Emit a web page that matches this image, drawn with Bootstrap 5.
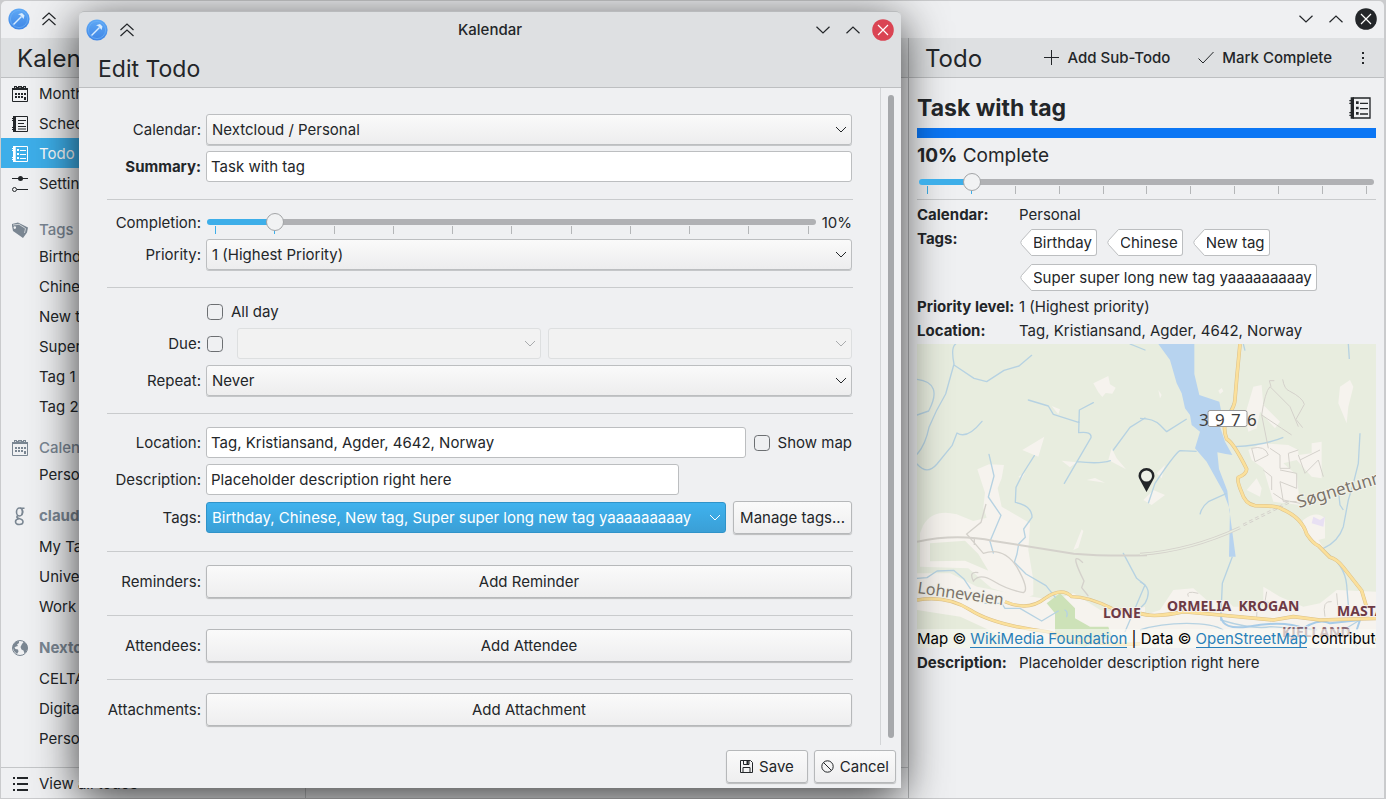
<!DOCTYPE html>
<html lang="en">
<head>
<meta charset="utf-8">
<meta name="viewport" content="width=device-width, initial-scale=1">
<title>Kalendar</title>
<link href="https://cdn.jsdelivr.net/npm/bootstrap@5.3.0/dist/css/bootstrap.min.css" rel="stylesheet">
<style>
:root{--ink:#232629;--win:#eff0f2;--head:#dee0e2;--line:#c4c6c8;--accent:#3daee9;--muted:#7a8692}
body{font:15px/24px Inter,"Noto Sans",sans-serif;color:var(--ink);background:#cacbcd;height:100vh;overflow:hidden;padding:1px 2px 1px 1px}
svg{display:block;flex:none}
.ic{fill:none;stroke:currentColor}
a{color:#2980b9}
.defs{position:absolute}
.main-win{background:var(--win);height:100%;border-radius:5px 5px 0 0}
.title-strip{height:37px;padding:0 7px 2px}
.icon-btn{border:0;background:none;padding:0;color:inherit;display:block}
.win-btns{gap:16px}
.close-btn{margin-left:-4px}
.keep-btn{margin-left:11px}
.pane-head{background:var(--head);height:40px;border-bottom:1px solid #bdbfc1}
.pane-title{font-size:24px;line-height:42px;font-weight:400;margin:0}
.detail-head{padding:0 18px 0 16px}
.detail-head .pane-title{padding-top:2px;line-height:38px}
.side{width:305px;border-right:1px solid var(--line)}
.detail{width:476px;border-left:1px solid #b4b6b8}
.side-item{height:30px;padding:2px 0 0 10px;gap:10px;color:inherit;text-decoration:none;display:flex;align-items:center;white-space:nowrap}
.side-item.sub-item{padding:0 0 0 38px}
.side-item.on{background:var(--accent);color:#fff}
.side-head{color:var(--muted);padding-left:10px;gap:10px;margin:13px 0 0;height:25px;font-size:15px;font-weight:500;display:flex;align-items:center}
.side-head.first{margin-top:20px;height:24px}
.side-head.acct{font-weight:700;height:32px;margin-top:10px}
.foot-bar{height:31px;border-top:1px solid var(--line)}
.tool-btn{border:0;background:none;padding:0;color:inherit;font-weight:500;display:flex;align-items:center;gap:8px}

.dialog-win{position:absolute;left:79px;top:11px;right:485px;bottom:11px;background:var(--win);border-radius:5px 5px 0 0;box-shadow:0 10px 46px rgba(0,0,0,.76)}
.dialog-top{background:var(--head);border-bottom:1px solid #bdbfc1;border-radius:5px 5px 0 0;height:77px;border-top:1px solid #b9bbbd}
.dialog-bar{height:35px;padding:0 7px}
.dialog-title{font-size:23px;line-height:44px;padding:0 19px}
.form-area{padding:26px 28px 0 28px;border-right:1px solid #d3d5d7}
.scroll-lane{width:20px;padding:7px}
.scroll-thumb{background:#a6a8ab;border-radius:3px;height:100%}
.f-row{display:grid;grid-template-columns:94px minmax(0,1fr);column-gap:5px;align-items:center;margin-bottom:6px}
.f-row>label,.f-row>.lab{text-align:right;white-space:nowrap;line-height:20px}
.f-rule{height:1px;border:0;opacity:1;background:#c9cbcd;margin:17px -1px 13px 0}
.f-row:has(+ .f-rule){margin-bottom:0}
.form-select,.form-control{height:31px;font-size:15px;line-height:20px;padding:0 5px;border:1px solid #bcbec0;border-radius:3px;color:var(--ink)}
.form-control{background:#fff;padding:0 4px}
.form-select{background:url("data:image/svg+xml,%3Csvg xmlns='http://www.w3.org/2000/svg' width='12' height='7'%3E%3Cpath d='M1 1l5 5 5-5' fill='none' stroke='%23232629'/%3E%3C/svg%3E") no-repeat right 4px center/12px 7px,linear-gradient(#fafafa,#ededee);box-shadow:0 1px 0 #c4c6c8}
.form-select:disabled{background:url("data:image/svg+xml,%3Csvg xmlns='http://www.w3.org/2000/svg' width='12' height='7'%3E%3Cpath d='M1 1l5 5 5-5' fill='none' stroke='%23a9abad'/%3E%3C/svg%3E") no-repeat right 4px center/12px 7px,#f2f2f2;border-color:#dddfe0;box-shadow:none}
.form-select.tags-sel{color:#fff;border-color:#2f93c9;background:url("data:image/svg+xml,%3Csvg xmlns='http://www.w3.org/2000/svg' width='12' height='7'%3E%3Cpath d='M1 1l5 5 5-5' fill='none' stroke='%23fff'/%3E%3C/svg%3E") no-repeat right 4px center/12px 7px,linear-gradient(#3fb2ee,#3a9fd6);box-shadow:none}
.k-btn{height:33px;font-size:15px;line-height:20px;padding:0 6px;border:1px solid #b6b8ba;border-radius:3px;background:linear-gradient(#fafafa,#eeeeef);color:var(--ink);box-shadow:0 1px 1px rgba(0,0,0,.22);white-space:nowrap}
.gap-tag{margin-left:7px}
.dialog-foot{padding:5px 5px 5px 0;gap:6px}
.dialog-foot .k-btn{display:flex;align-items:center;gap:6px}
.dialog-foot .save-btn{padding:0 13px}
.form-check-input{width:16px;height:16px;margin:0 0 0 1px;border:1px solid #6c6f72;border-radius:2px;background-color:var(--win);flex:none}
.check-row{height:21px}
.due-check{margin-right:14px}
.desc-box{width:73.2%}
.slide-wrap{position:relative;height:20px;flex:1;margin:0 1px}
.slide-wrap input{appearance:none;-webkit-appearance:none;display:block;width:100%;height:18px;background:none;margin:0;position:relative;z-index:1}
.slide-wrap input::-webkit-slider-runnable-track{height:6px;border-radius:3px;background:linear-gradient(90deg,var(--accent) 11%,#b0b1b4 11%)}
.slide-wrap input::-webkit-slider-thumb{-webkit-appearance:none;width:18px;height:18px;border-radius:50%;background:#f1f2f3;border:1px solid #a2a4a6;margin-top:-6px}
.ticks{position:absolute;left:8px;right:7px;top:13px;display:flex;justify-content:space-between}
.ticks i{width:1px;height:8px;background:#b4b6b8}
.ticks i:nth-child(-n+2){background:var(--accent)}
.pct{padding-left:5px;line-height:20px}
.task-line{height:50px;padding:15px 4px 5px 0}
.task-title{font-size:23px;line-height:30px;font-weight:700;margin:0}
.cal-strip{height:10px;background:#0b76f4}
.done{font-size:19px;line-height:24px;padding:6px 0 5px}
.detail-slide{margin:0 2px}
.detail-rule{margin:6px 0 3px}
.facts{display:grid;grid-template-columns:102px minmax(0,1fr);margin:0}
.facts dt{font-weight:700;white-space:nowrap}
.facts dd{margin:0}
.facts .chips{display:flex;flex-wrap:wrap;gap:8px 9px;padding:2px 0 4px}
.chip{position:relative;display:block;height:27px}
.chip svg{position:absolute;left:1px;top:0}
.chip span{display:block;height:27px;line-height:26px;background:#fff;border:1px solid #bcbec0;border-left:0;border-radius:0 3px 3px 0;margin-left:14px;padding-right:4px;white-space:nowrap}
.map-box{position:relative;height:304px;overflow:hidden;margin-top:1px}
.map-credit{position:absolute;left:0;right:0;bottom:0;height:19px;line-height:19px;background:rgba(250,250,245,.6);color:#000;white-space:nowrap;overflow:hidden}
.map-credit a{text-decoration:none;border-bottom:1px solid #2980b9;line-height:17px;display:inline-block}
.below-map{padding-top:3px}
</style>
</head>
<body>
<svg class="defs" width="0" height="0" aria-hidden="true">
  <defs>
    <linearGradient id="gb" x1="0" y1="0" x2="0" y2="1"><stop offset="0" stop-color="#5fa9f5"/><stop offset="1" stop-color="#3f86e6"/></linearGradient>
    <symbol id="app" viewBox="0 0 22 22"><circle cx="11" cy="11" r="10.6" fill="url(#gb)"/><circle cx="11" cy="11" r="8.6" fill="none" stroke="#6fb1f6" stroke-width=".7"/><path d="M5.500 16.500l8-8" stroke="#d7ecff" stroke-width="1.400"/><path d="M10 6.200l4-1.200 2.500 2.500-1 3.500-1.500-2-2-2z" fill="#d7ecff"/></symbol>
    <symbol id="up2" viewBox="0 0 16 14"><path d="M1.500 7L8 1l6.500 6M1.500 13L8 7l6.500 6" fill="none" stroke="currentColor" stroke-width="1.200"/></symbol>
    <symbol id="cdn" viewBox="0 0 14 8"><path d="M.5 .7L7 7l6.500-6.300" fill="none" stroke="currentColor" stroke-width="1.200"/></symbol>
    <symbol id="cup" viewBox="0 0 14 8"><path d="M.5 7.300L7 1l6.500 6.300" fill="none" stroke="currentColor" stroke-width="1.200"/></symbol>
    <symbol id="cal" viewBox="0 0 18 18"><path d="M1.500 3.500h15v13h-15z" fill="none" stroke="currentColor"/><path d="M1 3h2V1h3v1h1V1h4v1h1V1h3v2h2v2H1z" fill="currentColor"/><path d="M7 8h2v2H7zM10 8h2v2h-2zM13 8h2v2h-2zM4 11h2v2H4zM7 11h2v2H7zM10 11h2v2h-2zM4 8h2v2H4zM13 12h2v3h-2z" fill="currentColor"/><path d="M4 2.500h1M8.500 2.500h1M13 2.500h1" stroke="#eff0f2" stroke-width=".8"/></symbol>
    <symbol id="sch" viewBox="0 0 18 18"><path d="M4 1.500h12.500v15H4z" fill="none" stroke="currentColor"/><path d="M2 1h3v16H2zM1 3h1v1H1zM1 5h1v1H1zM1 12h1v1H1zM1 14h1v1H1z" fill="currentColor"/><path d="M7 5.500h8M7 8.500h6M7 11.500h8M7 14h8" stroke="currentColor"/></symbol>
    <symbol id="todo" viewBox="0 0 18 18"><path d="M4 1.500h12.500v15H4z" fill="none" stroke="currentColor"/><path d="M2 1h2.500v16H2zM1 3h1v1H1zM1 5h1v1H1zM1 12h1v1H1zM1 14h1v1H1zM6 4h2v2H6zM6 8h2v2H6zM6 12h2v2H6z" fill="currentColor"/><path d="M9 5.500h6M9 9.500h6M9 13.500h6" stroke="currentColor"/></symbol>
    <symbol id="tip" viewBox="0 0 14 27"><path d="M14 .5h-2.500L1.500 11.500q-1.500 2 0 4l10 11H14" fill="#fff" stroke="#bcbec0"/></symbol>
  </defs>
</svg>

<div class="main-win d-flex flex-column">
  <div class="title-strip d-flex align-items-center">
    <svg width="22" height="22"><use href="#app"/></svg>
    <button class="icon-btn keep-btn" aria-label="Keep above"><svg width="16" height="14"><use href="#up2"/></svg></button>
    <div class="win-btns ms-auto d-flex align-items-center">
      <button class="icon-btn" aria-label="Minimize"><svg width="14" height="8"><use href="#cdn"/></svg></button>
      <button class="icon-btn" aria-label="Maximize"><svg width="14" height="8"><use href="#cup"/></svg></button>
      <button class="icon-btn close-btn" aria-label="Close"><svg width="22" height="22" viewBox="0 0 22 22"><circle cx="11" cy="11" r="10.800" fill="#232629"/><path d="M6 6l10 10M16 6L6 16" stroke="#fff" stroke-width="1.200"/></svg></button>
    </div>
  </div>
  <div class="d-flex flex-grow-1">
    <nav class="side d-flex flex-column flex-shrink-0">
      <div class="pane-head ps-3"><h1 class="pane-title">Kalendar</h1></div>
      <a class="side-item" href="#"><svg width="18" height="18"><use href="#cal"/></svg>Month</a>
      <a class="side-item" href="#"><svg width="18" height="18"><use href="#sch"/></svg>Schedule</a>
      <a class="side-item on" href="#"><svg width="18" height="18"><use href="#todo"/></svg>Todo</a>
      <a class="side-item" href="#"><svg width="18" height="18" viewBox="0 0 18 18" class="ic"><path d="M1 3.500h16M6 14.500h11"/><circle cx="9.500" cy="3.500" r="2.500" fill="currentColor" stroke="none"/><circle cx="3.500" cy="14.500" r="2"/></svg>Settings</a>
      <h2 class="side-head first"><svg width="18" height="18" viewBox="0 0 18 18" fill="currentColor"><path d="M1 3L7 1.500l10 5-1 5-4 5.500-10-7L1 5zM3.800 5.300a1.300 1.300 0 100 2.600 1.300 1.300 0 000-2.600z" fill-rule="evenodd"/><path d="M2 4l6-.7 6.500 4.200-1 4.500" fill="none" stroke="#eff0f2" stroke-width=".7"/></svg>Tags</h2>
      <a class="side-item sub-item" href="#">Birthday</a><a class="side-item sub-item" href="#">Chinese</a><a class="side-item sub-item" href="#">New tag</a><a class="side-item sub-item" href="#">Super super long</a><a class="side-item sub-item" href="#">Tag 1</a><a class="side-item sub-item" href="#">Tag 2</a>
      <h2 class="side-head"><svg width="18" height="18"><use href="#cal"/></svg>Calendars</h2>
      <a class="side-item sub-item" href="#">Personal</a>
      <h2 class="side-head acct"><svg width="18" height="20" viewBox="0 0 18 20" class="ic" stroke-width="1.600"><ellipse cx="8.500" cy="6" rx="3" ry="4"/><path d="M9 2.200h4.500M7 9.500c-2 1.500-1 2.500 1 3s4 1.500 4 3.300-1.800 2.700-3.800 2.700-3.700-1-3.700-2.700 1.500-2.800 3.500-3M11 3.500c1 1 1 4-.5 5.500"/></svg>claudio</h2>
      <a class="side-item sub-item" href="#">My Tasks</a><a class="side-item sub-item" href="#">University</a><a class="side-item sub-item" href="#">Work</a>
      <h2 class="side-head acct"><svg width="18" height="18" viewBox="0 0 18 18"><circle cx="9" cy="9" r="7.500" class="ic"/><path d="M2 6l3-3.500L8 2v2L6 5.500 7 7l-2 .5-1.500 1 1 1.500 2.500.5.500 2-1.500 2.500-3-3-1-3zM11 5l2-2.500L16 6l.5 4-2 3.500-1 1-1-3-2-1L9.500 8z" fill="currentColor"/></svg>Nextcloud</h2>
      <a class="side-item sub-item" href="#">CELTA</a><a class="side-item sub-item" href="#">Digital</a><a class="side-item sub-item" href="#">Personal</a>
      <div class="foot-bar mt-auto"><a class="side-item" href="#"><svg width="18" height="18" viewBox="0 0 18 18" fill="currentColor"><path d="M2 2h2v2H2zM2 8h2v2H2zM2 14h2v2H2zM6 2h11v2H6zM6 8h11v2H6zM6 14h11v2H6z"/></svg>View all todos</a></div>
    </nav>
    <main class="flex-grow-1 d-flex flex-column"><div class="pane-head"></div><div class="foot-bar mt-auto"></div></main>
    <section class="detail d-flex flex-column flex-shrink-0">
      <div class="pane-head detail-head d-flex align-items-center">
        <h2 class="pane-title">Todo</h2>
        <button class="tool-btn ms-auto"><svg width="15" height="15" viewBox="0 0 15 15" class="ic"><path d="M7.500 0v15M0 7.500h15"/></svg>Add Sub-Todo</button>
        <button class="tool-btn ms-4 ps-1"><svg width="16" height="13" viewBox="0 0 16 13" class="ic"><path d="M.5 7.500L5 12 15.500 1"/></svg>Mark Complete</button>
        <button class="icon-btn ms-4 ps-1" aria-label="More"><svg width="6" height="14" viewBox="0 0 6 14" fill="currentColor"><path d="M2 1h2v2H2zM2 6h2v2H2zM2 11h2v2H2z"/></svg></button>
      </div>
      <div class="px-2">
        <div class="task-line d-flex align-items-center justify-content-between"><h3 class="task-title">Task with tag</h3><svg width="24" height="24"><use href="#todo"/></svg></div>
        <div class="cal-strip"></div>
        <div class="done"><strong>10%</strong> Complete</div>
        <div class="slide-wrap detail-slide"><input type="range" value="10" aria-label="Completion"><div class="ticks"><i></i><i></i><i></i><i></i><i></i><i></i><i></i><i></i><i></i><i></i><i></i></div></div>
        <hr class="f-rule detail-rule">
        <dl class="facts">
          <dt>Calendar:</dt><dd>Personal</dd>
          <dt>Tags:</dt>
          <dd class="chips">
            <div class="chip"><svg width="14" height="27"><use href="#tip"/></svg><span>Birthday</span></div>
            <div class="chip"><svg width="14" height="27"><use href="#tip"/></svg><span>Chinese</span></div>
            <div class="chip"><svg width="14" height="27"><use href="#tip"/></svg><span>New tag</span></div>
            <div class="chip"><svg width="14" height="27"><use href="#tip"/></svg><span>Super super long new tag yaaaaaaaaay</span></div>
          </dd>
          <dt>Priority level:</dt><dd>1 (Highest priority)</dd>
          <dt>Location:</dt><dd>Tag, Kristiansand, Agder, 4642, Norway</dd>
        </dl>
        <div class="map-box">
          <svg width="100%" height="304" viewBox="0 0 459 304" preserveAspectRatio="xMinYMin slice" role="img" aria-label="Map">
            <rect width="459" height="304" fill="#e8eddf"/>
            <g transform="translate(-12 -4) scale(.33333)" fill="#f6f3ee">
              <path d="M217 388l35-15 45 2-7 40-12 30 12 55 85 50-5 80 15 90 0 45-25 10-100-30-70-60-145-5V580l10-25q30-50 100-32l50 20 40-10-10-30 5-45zM565 130l45-22 5 25 17 10-10 18-20-2-10 12-12-14zM352 330l66-40-18 60zM470 362l45 5-20 15zM440 198l25 10-5 15zM505 630l25-62 5 5-15 50zM545 420l25-6 30 14zM610 360l10-35 15 30 28 33zM340 410l20-12-10 18z"/>
              <path d="M36 700h100l80 40 100 20 130 20 60-20 80 50 80 10 54-20v120H36z"/>
              <path d="M75 610l105-8 40 40 30 50-70-30-105 2z" fill="#e6ebdc"/>
              <path d="M36 810l130 20 130 60v70H36z" fill="#e6ebdb"/>
              <path d="M425 790l40-30 45 45 0 30 45 25 55 0 10 30-80 30-90-20v-80z" fill="#cde2b8"/>
              <g fill="none" stroke="#b6d2e2" stroke-width="4" stroke-linejoin="round" stroke-linecap="round">
                <path d="M152 12q-15 10-5 60l-25 90q-30 50-50 100-10 50-35 80M147 75l60 40 38 10 52-34 45-13 38-32M36 118q80 10 35 95l-35 12M36 372q30 35 60 0l45-55 15-38q30 20 75-35M252 343l15 65-17 63 38 55-33 78 10 35M388 347l-35 55-20 40-2 45q50 10 50 45l-25 35 5 25-20 20-5 30-8 25 35 35 60 35 28 35M370 180l60 18 15 25 78 25M565 188l-42 22-2 68q40-5 37 15l-80 137M516 365q70 8 100-3M625 330l50-68 45-28M675 12l45 18M36 715l30-2 30-20 50-2 30 25 20 30M240 790l50 0 10 15 45 0 65 38 50-30M480 810q10 5 5 20M655 640l40 75 25 20-60 140"/>
              </g>
              <g fill="none" stroke="#d4d1cb" stroke-width="4"><path d="M243 492l-15 55-43 35 50 58q60-20 100 40 40 70 20 78-50-10-90-35t-60 0q-15-30 15-25M208 595v20M550 768l-20-25 7-20q-40-80-15-65l12 10"/><path d="M36 605q120-25 230-2l240 38q90 8 220 5" stroke-width="6"/></g>
              <path d="M36 780q90-15 160 30t230 65q150 50 300 35M300 785q70 30 120-10 50-35 80-5 50 0 120 35l110 20" fill="none" stroke="#dcc088" stroke-width="10"/>
              <path d="M36 780q90-15 160 30t230 65q150 50 300 35M300 785q70 30 120-10 50-35 80-5 50 0 120 35l110 20" fill="none" stroke="#fbe09b" stroke-width="7"/>
            </g>
            <g transform="translate(223 -4) scale(.33333)" fill="#f6f3ee">
              <path d="M340 140l25-5 5 60 50 50-15 20-45-50-10 50-25 10-10-50zM595 190l5-50 30-20 10 20-15 60-5 50zM325 330l40-20 80 5 30 15 0 15 40-5 0-30 30-5v110l-30-5-45-50-40 10 40 35 10 90-80-10-30-100-35-25zM320 450l30-35 15 30-5 25zM490 540q40-30 65-5v60l-20 5 20 30-30-10-45-60zM235 152l10-8 5 10-10 8zM10 480l30-30 35 15-40 30zM55 150l10 15-5 10zM50 400l25-25-10 40z"/>
              <path d="M0 830l60-20 40-60 60-5 40 35 60 0 20 20 90 0 0-60 50 30 70 30 50-10 50-40 118 5V923H0z"/>
              <path d="M520 530l20 10 15-10-5 30-35-10z" fill="#e8e0f3"/>
              <path d="M55 12h108l0 90 15 63 60 20 8 40-6 35 15 45 22 40-20-3-25-5 5 50 25 65 5 50 20 148h-20l3-140-20-55-50-90-35-40 15-50-25-20-5-30-15-20-10-45-15-30-20-70z" fill="#b7d3ef"/>
              <g fill="none" stroke="#b6d2e2" stroke-width="4" stroke-linejoin="round"><path d="M310 12l5 20M625 12l3 45M660 280l-5 90-15 60-15 50-15 80q-15 45-60 65M595 450l5 45 10 15M285 320q90-5 145-28M280 190l-10 20-15 10M0 235q40 0 60 20l20 20 60-38M25 490l20-60q60-90 75-98l50 2M260 460l-55 25q-20 15-25 38M277 650l-30 80-5 110q100 30 150 20l140 10M0 725q40 20 15 65l-15 15M0 870q60-20 140-20t110 20M555 635q60 40 65 100l5 60M560 900l100-60M610 860l40 60"/><path d="M243 830q5 40 80 30 110-20 170 5M470 880q60-50 100-30l90-10-10 30" stroke="#a8cce8" stroke-width="6"/></g>
              <g fill="none" stroke="#d4d1cb" stroke-width="3"><path d="M385 325l-20-100q10-70 25-85l60 60 25 60M393 140l-5-18 15 0M428 118q5 30 20 35 40 20 45 40l-25 45 20 25M365 225l60 40 30 20M335 325q40-10 50 20l-40 20zM390 325l30 20v40l30 0-5-45 30-10M480 360l60-30M475 345l20 55 40-40 15 50M370 390l25 20 0 40M420 390l50 10 0 45-50-20 10 60 40 0M400 460l30 20 50 10M555 830q-10-50 20-45M145 770q-10-20 30-10M375 785l5-30M350 830q0-50 20-45l40 5M590 760l5 60"/><path d="M0 643q150-10 300-80" stroke-width="9"/><path d="M0 643q150-10 300-80" stroke="#e8eddf" stroke-width="4"/><path d="M310 555l140-70" stroke-width="8" stroke-dasharray="12 8"/><path d="M310 555l140-70" stroke-width="3" stroke="#e8eddf"/></g>
              <path d="M300 12l-10 105-5 60q0 20-20 50-20 30-5 70 20 10 60 90 0 15-25 25-5 10 10 45 10 35 40 40 70 0 80 10 60 25 75 75 20 30 35 35l35 35q20 5 40 30l55 70 15 50M0 820q40 15 130-5l110 10 160 15 60-10 80 10 168-5" fill="none" stroke="#dcc088" stroke-width="11" stroke-linejoin="round"/>
              <path d="M300 12l-10 105-5 60q0 20-20 50-20 30-5 70 20 10 60 90 0 15-25 25-5 10 10 45 10 35 40 40 70 0 80 10 60 25 75 75 20 30 35 35l35 35q20 5 40 30l55 70 15 50M0 820q40 15 130-5l110 10 160 15 60-10 80 10 168-5" fill="none" stroke="#fbe09b" stroke-width="8" stroke-linejoin="round"/>
            </g>
            <rect x="291" y="66.500" width="39" height="16" rx="2" fill="#fff" stroke="#999"/>
            <g font-family="Noto Sans,sans-serif" font-size="17" fill="#3f3f3f"><text x="282" y="82">3</text><text x="298" y="82">9</text><text x="314" y="82">7</text><text x="330" y="82">6</text></g>
            <path d="M229.500 124a8 8 0 018 8q0 2-2 5l-6 11-6-11q-2-3-2-5a8 8 0 018-8z" fill="#232629"/><circle cx="229.500" cy="132" r="5.500" fill="#eef1e8"/>
            <g font-family="Noto Sans,sans-serif" fill="#7c746a" stroke="#f2f2ea" stroke-width="2" paint-order="stroke"><text font-size="16" transform="rotate(8 0 249)" x="0" y="249">Lohneveien</text><text font-size="17" transform="rotate(-17 382 164)" x="382" y="164">Søgnetunnelen</text></g>
            <g font-family="Noto Sans,sans-serif" font-weight="700" font-size="14" fill="#6d3a45" stroke="#f5f0ee" stroke-width="2" paint-order="stroke"><text x="186" y="274">LONE</text><text x="250" y="267">ORMELIA&#160; KROGAN</text><text x="420" y="272">MASTA</text><text x="365" y="293" opacity=".7">KJELLAND</text></g>
          </svg>
          <div class="map-credit">Map © <a href="#">WikiMedia Foundation</a> | Data © <a href="#">OpenStreetMap</a> contributors</div>
        </div>
        <dl class="facts below-map"><dt>Description:</dt><dd>Placeholder description right here</dd></dl>
      </div>
    </section>
  </div>
</div>

<div class="dialog-win d-flex flex-column" role="dialog" aria-label="Edit Todo">
  <div class="dialog-top flex-shrink-0">
    <div class="dialog-bar d-flex align-items-center position-relative">
      <svg width="22" height="22"><use href="#app"/></svg>
      <button class="icon-btn keep-btn" aria-label="Keep above"><svg width="16" height="14"><use href="#up2"/></svg></button>
      <div class="flex-grow-1"></div>
      <div class="position-absolute start-50 translate-middle-x fw-medium">Kalendar</div>
      <div class="win-btns d-flex align-items-center">
        <button class="icon-btn" aria-label="Minimize"><svg width="14" height="8"><use href="#cdn"/></svg></button>
        <button class="icon-btn" aria-label="Maximize"><svg width="14" height="8"><use href="#cup"/></svg></button>
        <button class="icon-btn close-btn" aria-label="Close"><svg width="22" height="22" viewBox="0 0 22 22"><circle cx="11" cy="11" r="10.800" fill="#da4453"/><path d="M6 6l10 10M16 6L6 16" stroke="#fff" stroke-width="1.200"/></svg></button>
      </div>
    </div>
    <h2 class="pane-title dialog-title">Edit Todo</h2>
  </div>
  <div class="d-flex flex-grow-1">
    <form class="form-area flex-grow-1">
      <div class="f-row"><label for="fc">Calendar:</label><select id="fc" class="form-select"><option>Nextcloud / Personal</option></select></div>
      <div class="f-row"><label for="fs" class="fw-bold">Summary:</label><input id="fs" class="form-control" value="Task with tag"></div>
      <hr class="f-rule">
      <div class="f-row"><label for="fp">Completion:</label><div class="d-flex align-items-center"><div class="slide-wrap"><input id="fp" type="range" value="10"><div class="ticks"><i></i><i></i><i></i><i></i><i></i><i></i><i></i><i></i><i></i><i></i><i></i></div></div><span class="pct">10%</span></div></div>
      <div class="f-row"><label for="fr">Priority:</label><select id="fr" class="form-select"><option>1 (Highest Priority)</option></select></div>
      <hr class="f-rule">
      <div class="f-row check-row"><span></span><div class="d-flex align-items-center gap-2"><input class="form-check-input" type="checkbox" id="fa"><label for="fa" class="lh-1">All day</label></div></div>
      <div class="f-row"><label for="fd">Due:</label><div class="d-flex align-items-center"><input class="form-check-input due-check" type="checkbox" id="fd"><select class="form-select flex-fill w-auto" disabled aria-label="Due date"></select><select class="form-select flex-fill w-auto gap-tag" disabled aria-label="Due time"></select></div></div>
      <div class="f-row"><label for="fn">Repeat:</label><select id="fn" class="form-select"><option>Never</option></select></div>
      <hr class="f-rule">
      <div class="f-row"><label for="fl">Location:</label><div class="d-flex align-items-center gap-2"><input id="fl" class="form-control" value="Tag, Kristiansand, Agder, 4642, Norway"><input class="form-check-input ms-0" type="checkbox" id="fm"><label for="fm" class="text-nowrap">Show map</label></div></div>
      <div class="f-row"><label for="fe">Description:</label><input id="fe" class="form-control desc-box" value="Placeholder description right here"></div>
      <div class="f-row"><label for="ft">Tags:</label><div class="d-flex align-items-center"><select id="ft" class="form-select tags-sel"><option>Birthday, Chinese, New tag, Super super long new tag yaaaaaaaaay</option></select><button type="button" class="k-btn gap-tag">Manage tags...</button></div></div>
      <hr class="f-rule">
      <div class="f-row"><span class="lab">Reminders:</span><button type="button" class="k-btn">Add Reminder</button></div>
      <hr class="f-rule">
      <div class="f-row"><span class="lab">Attendees:</span><button type="button" class="k-btn">Add Attendee</button></div>
      <hr class="f-rule">
      <div class="f-row"><span class="lab">Attachments:</span><button type="button" class="k-btn">Add Attachment</button></div>
    </form>
    <div class="scroll-lane flex-shrink-0"><div class="scroll-thumb"></div></div>
  </div>
  <div class="dialog-foot d-flex justify-content-end flex-shrink-0">
    <button type="button" class="k-btn save-btn"><svg width="13" height="13" viewBox="0 0 13 13" class="ic"><path d="M.5 .5h10l2 2v10H.5zM3 12.500v-5h7v5M3.500 .5v4h5.500v-4"/><path d="M6.500 1h2v3h-2z" fill="currentColor" stroke="none"/></svg>Save</button>
    <button type="button" class="k-btn"><svg width="13" height="13" viewBox="0 0 13 13" class="ic"><circle cx="6.500" cy="6.500" r="5.700"/><path d="M2.500 2.500l8 8"/></svg>Cancel</button>
  </div>
</div>
<script src="https://cdn.jsdelivr.net/npm/bootstrap@5.3.0/dist/js/bootstrap.bundle.min.js"></script>
</body>
</html>
